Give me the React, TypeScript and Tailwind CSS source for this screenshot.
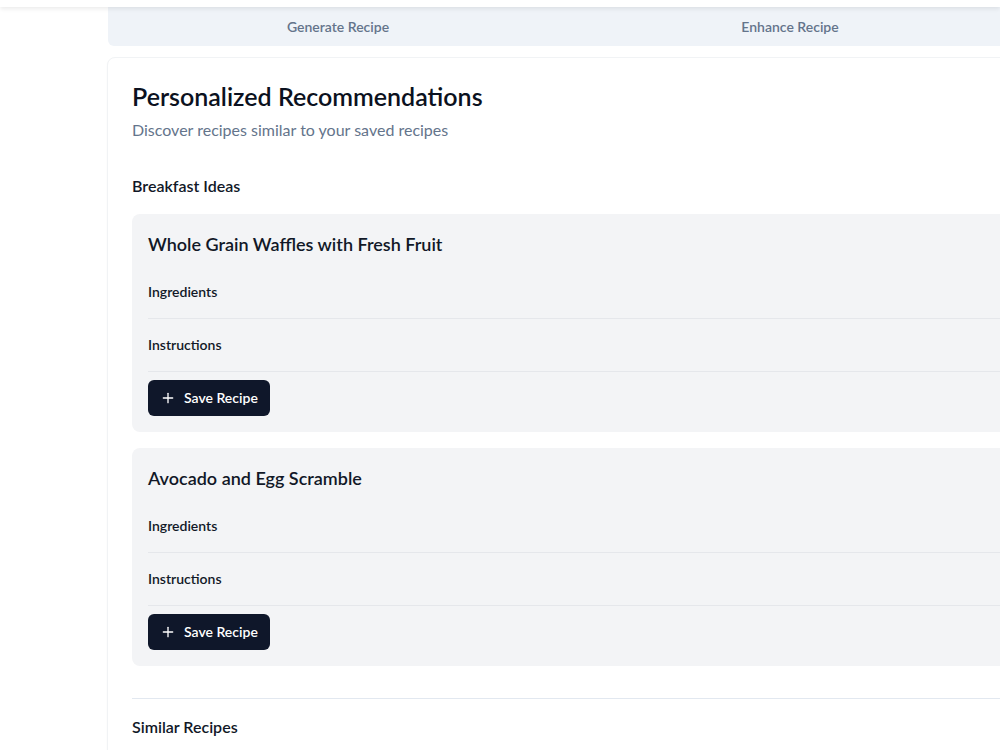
import React from 'react';
import { Plus } from 'lucide-react';

const recipes = ['Whole Grain Waffles with Fresh Fruit', 'Avocado and Egg Scramble'];

const RecipeCard = ({ title }: { title: string }) => {
  return (
    <div className="rounded-lg bg-[#f3f4f6] px-4 pt-4 pb-4">
      <h4 className="text-lg leading-7 font-semibold text-[#111827]">{title}</h4>
      <div className="mt-2">
        <div className="border-b border-[#e5e7eb]">
          <button className="flex w-full items-center py-4 text-sm leading-5 font-semibold text-[#111827]">Ingredients</button>
        </div>
        <div className="border-b border-[#e5e7eb]">
          <button className="flex w-full items-center py-4 text-sm leading-5 font-semibold text-[#111827]">Instructions</button>
        </div>
      </div>
      <button className="mt-2 flex h-9 items-center gap-2 rounded-md bg-[#0f172a] px-3 text-sm font-semibold text-white">
        <Plus size={16} strokeWidth={2} />
        Save Recipe
      </button>
    </div>
  );
};

const App = () => {
  return (
    <div className="h-[750px] w-[1000px] overflow-hidden bg-white" style={{ fontFamily: 'Lato, "Noto Sans", sans-serif' }}>
      <div className="relative z-10 h-[7px] bg-white shadow-[0_2px_4px_rgba(0,0,0,0.08)]" />
      <div className="flex">
        <div className="w-[107px] shrink-0" />
        <div className="w-[1400px] shrink-0">
          <div className="ml-px grid h-[39px] w-[912px] grid-cols-2 rounded-b-md bg-[#eff3f8] px-1">
            <div className="flex items-center justify-center text-sm font-semibold text-[#64748b]">Generate Recipe</div>
            <div className="flex items-center justify-center text-sm font-semibold text-[#64748b]">Enhance Recipe</div>
          </div>
          <div className="mt-[11px] h-[800px] rounded-lg border border-[#f1f3f5] bg-white shadow-[0_1px_2px_rgba(0,0,0,0.03)]">
            <div className="px-6 pt-[22px]">
              <h2 className="text-[25px] leading-8 font-semibold text-[#0b1120]">Personalized Recommendations</h2>
              <p className="mt-[6px] text-base leading-6 text-[#64748b]">Discover recipes similar to your saved recipes</p>
            </div>
            <div className="px-6 pt-8">
              <h3 className="text-base leading-6 font-semibold text-[#111827]">Breakfast Ideas</h3>
              <div className="mt-4 space-y-4">
                {recipes.map((r) => (
                  <RecipeCard key={r} title={r} />
                ))}
              </div>
              <div className="mt-8 border-t border-[#e2e8f0] pt-4">
                <h3 className="text-base leading-6 font-semibold text-[#111827]">Similar Recipes</h3>
              </div>
            </div>
          </div>
        </div>
      </div>
    </div>
  );
};

export default App;
